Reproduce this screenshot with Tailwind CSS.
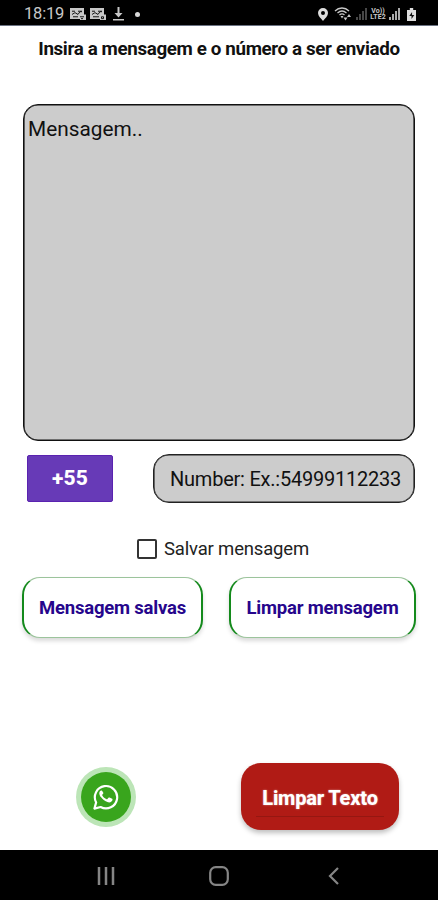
<!DOCTYPE html>
<html lang="pt-BR">
<head>
  <meta charset="UTF-8">
  <title>Mensagem</title>
  <script src="https://cdn.jsdelivr.net/npm/@tailwindcss/browser@4"></script>
</head>
<body class="bg-white font-[Roboto,sans-serif] text-black">
  <div class="w-[438px] h-[900px] flex flex-col overflow-hidden whitespace-nowrap">

    <!-- Status bar -->
    <header class="h-[26px] shrink-0 bg-black border-b border-gray-500 flex items-center justify-between pl-6 pr-[22px] pt-[3px] text-[#c8c8c8]">
      <div class="flex items-center">
        <span class="w-[46px] text-[16.5px] leading-none tracking-[-0.2px] pt-px">18:19</span>
        <svg class="w-[16px] h-[12px]" viewBox="0 0 16 13" preserveAspectRatio="none">
          <path fill="currentColor" d="M0 0h14v7h2v6h-6v-1H0z"/>
          <path fill="none" stroke="#111" d="M2 3.5h3M2 7l3-2 3 2 2-3h2M8 3.5h4M3 9.5h5M10 9.5h4M11 11.5h2"/>
        </svg>
        <svg class="w-[16px] h-[12px] ml-[4px]" viewBox="0 0 16 13" preserveAspectRatio="none">
          <path fill="currentColor" d="M0 0h14v7h2v6h-6v-1H0z"/>
          <path fill="none" stroke="#111" d="M2 3.5h3M2 7l3-2 3 2 2-3h2M8 3.5h4M3 9.5h6M11.5 9.5h2v2h-2z"/>
        </svg>
        <svg class="w-[11px] h-[14px] ml-[7px]" viewBox="0 0 11 14" fill="currentColor">
          <path d="M4.500 0h2v6h3l-4 4.500-4-4.500h3zM0 12h11v1.500H0z"/>
        </svg>
        <span class="size-[5px] ml-[11px] rounded-full bg-[#d8d8d8]"></span>
      </div>
      <div class="flex items-center">
        <svg class="w-[10px] h-[13px]" viewBox="0 0 10 13">
          <path fill="#dedede" fill-rule="evenodd" d="M5 0a5 5 0 0 1 5 5c0 3-3 5.500-5 8-2-2.500-5-5-5-8a5 5 0 0 1 5-5zm0 3a2 2 0 1 0 0 4 2 2 0 0 0 0-4z"/>
        </svg>
        <svg class="w-[18px] h-[14px] ml-[6px]" viewBox="0 0 18 14" fill="none" stroke="currentColor" stroke-width="1.3">
          <path d="M1 4c4-4 10-4 14 0M3.500 6c3-2.700 6-2.700 9 0M5.500 8c1.700-1.500 3.300-1.500 5 0"/>
          <path fill="currentColor" stroke="none" d="M6.500 9h3L8 11.500zM9.500 10.500h4l-2 3zM13 10l2-3 2 3z"/>
        </svg>
        <svg class="w-[12px] h-[12px] ml-[4px]" viewBox="0 0 12 12" fill="#484848">
          <path d="M0 9h2v3H0zM3 6h2v6H3zM6 3h2v9H6zM9 0h2v12H9z"/>
        </svg>
        <span class="w-[18px] ml-[1px] flex flex-col items-center text-[7px] leading-[6.5px] font-bold"><span>Vo))</span><span>LTE2</span></span>
        <svg class="w-[12px] h-[12px] ml-[2px]" viewBox="0 0 12 12" fill="#aaa">
          <path d="M0 9h2v3H0zM3 6h2v6H3zM6 3h2v9H6zM9 0h2v12H9z"/>
        </svg>
        <svg class="w-[9px] h-[13px] ml-[6px]" viewBox="0 0 8 13" preserveAspectRatio="none">
          <path fill="#dedede" d="M2.500 0h3v2H8v11H0V2h2.500z"/>
          <path fill="#111" d="M4.500 4L2 8h2v3l2.500-4h-2z"/>
        </svg>
      </div>
    </header>

    <main class="h-[824px] shrink-0 flex flex-col">
      <h1 class="mt-[11px] h-6 leading-6 text-center text-[18.8px] tracking-[-0.37px] font-bold text-[#111]">Insira a mensagem e o número a ser enviado</h1>

      <div class="mt-[43px] ml-[23px] w-[392px] h-[337px] shrink-0 rounded-[15px] border border-[#111] bg-[#ccc] shadow-[inset_0_0_0_0.6px_#111] pl-[4px] pt-[12px] text-[20.8px] leading-6 text-[#111]">Mensagem..</div>

      <div class="mt-[13px] ml-[27px] mr-[23px] h-[49px] shrink-0 flex items-center justify-between">
        <button class="w-[86px] h-[47px] rounded-[2px] border border-[#5a22b0] bg-[#673ab7] text-white text-[21px] font-extrabold tracking-[0.2px]">+55</button>
        <div class="w-[262px] h-[49px] rounded-[16px] border border-[#222] bg-[#ccc] shadow-[inset_0_0_0_0.6px_#222] flex items-center pl-[16px] text-[20px] tracking-[-0.23px] text-[#111]">Number: Ex.:54999112233</div>
      </div>

      <label class="mt-[34px] ml-[137px] h-6 shrink-0 flex items-center gap-[7px] text-[18.5px] tracking-[-0.17px] text-[#222]">
        <span class="size-5 rounded-[2px] border-2 border-[#333]"></span>
        <span class="pt-[2px]">Salvar mensagem</span>
      </label>

      <div class="mt-[16px] ml-[22px] mr-[22px] h-[61px] shrink-0 flex justify-between text-[18.5px] tracking-[-0.2px] font-bold text-[#26068c]">
        <button class="w-[181px] pt-[2px] rounded-[18px] border-x-[2.5px] border-y border-x-[#148a1c] border-y-[#9cc49c] bg-white shadow-[0_3px_4px_rgba(0,0,0,0.15)]">Mensagem salvas</button>
        <button class="w-[187px] pt-[2px] rounded-[18px] border-x-[2.5px] border-y border-x-[#148a1c] border-y-[#9cc49c] bg-white shadow-[0_3px_4px_rgba(0,0,0,0.15)]">Limpar mensagem</button>
      </div>

      <div class="mt-[125px] ml-[76px] mr-[39px] h-[67px] shrink-0 flex items-center justify-between">
        <button class="size-[60px] rounded-full bg-[#bce5b7] flex items-center justify-center">
          <span class="size-[50px] rounded-full bg-[#39a51d] flex items-center justify-center">
            <svg class="size-[26px]" viewBox="0 0 24 24" fill="white">
              <path fill="none" stroke="white" stroke-width="2" stroke-linejoin="round" d="M1.300 22.700l1.600-5.700A10.300 10.300 0 1 1 7 21.200z"/>
              <path d="M8.500 6.500c-.3-.6-.6-.6-.9-.6-.8 0-1.800 1-1.800 2.600 0 1.700 1.200 3.300 1.500 3.600 1.300 1.900 3.500 4 6.600 4.800 2.100.5 4-.8 4.100-2.300 0-.5 0-.8-.3-.9l-2.500-1.200c-.4-.2-.7-.1-.9.200l-1 1.200c-.2.200-.4.200-.7.100-1.700-.7-3.100-1.900-4-3.500-.2-.3 0-.5.100-.7l.8-1c.1-.3.100-.5 0-.7z"/>
            </svg>
          </span>
        </button>
        <button class="w-[158px] h-[67px] rounded-[20px] bg-[#b01b15] shadow-[0_3px_5px_rgba(0,0,0,0.25)] flex flex-col items-center justify-end pb-[13px] text-white text-[20px] tracking-[-0.2px] font-extrabold">
          <span class="w-[128px] h-[34px] border-b border-[#951711] leading-[30px] [text-shadow:0_0_2px_rgba(255,255,255,0.5)]">Limpar Texto</span>
        </button>
      </div>
    </main>

    <!-- Navigation bar -->
    <nav class="h-[50px] shrink-0 bg-black flex items-center pl-[97px] pt-[2px] text-[#858585]">
      <svg class="w-[18px] h-[18px]" viewBox="0 0 18 18" fill="none" stroke="currentColor" stroke-width="2.5"><path d="M2 0v18M9 0v18M16 0v18"/></svg>
      <svg class="w-[20px] h-[20px] ml-[94px] mb-px" viewBox="0 0 20 20" fill="none" stroke="currentColor" stroke-width="2.2"><rect x="1.200" y="1.200" width="17.600" height="17.600" rx="5.500"/></svg>
      <svg class="w-[11px] h-[18px] ml-[99px]" viewBox="0 0 11 18" fill="none" stroke="currentColor" stroke-width="2.2"><path d="M10 1L2 9l8 8"/></svg>
    </nav>
  </div>
</body>
</html>
